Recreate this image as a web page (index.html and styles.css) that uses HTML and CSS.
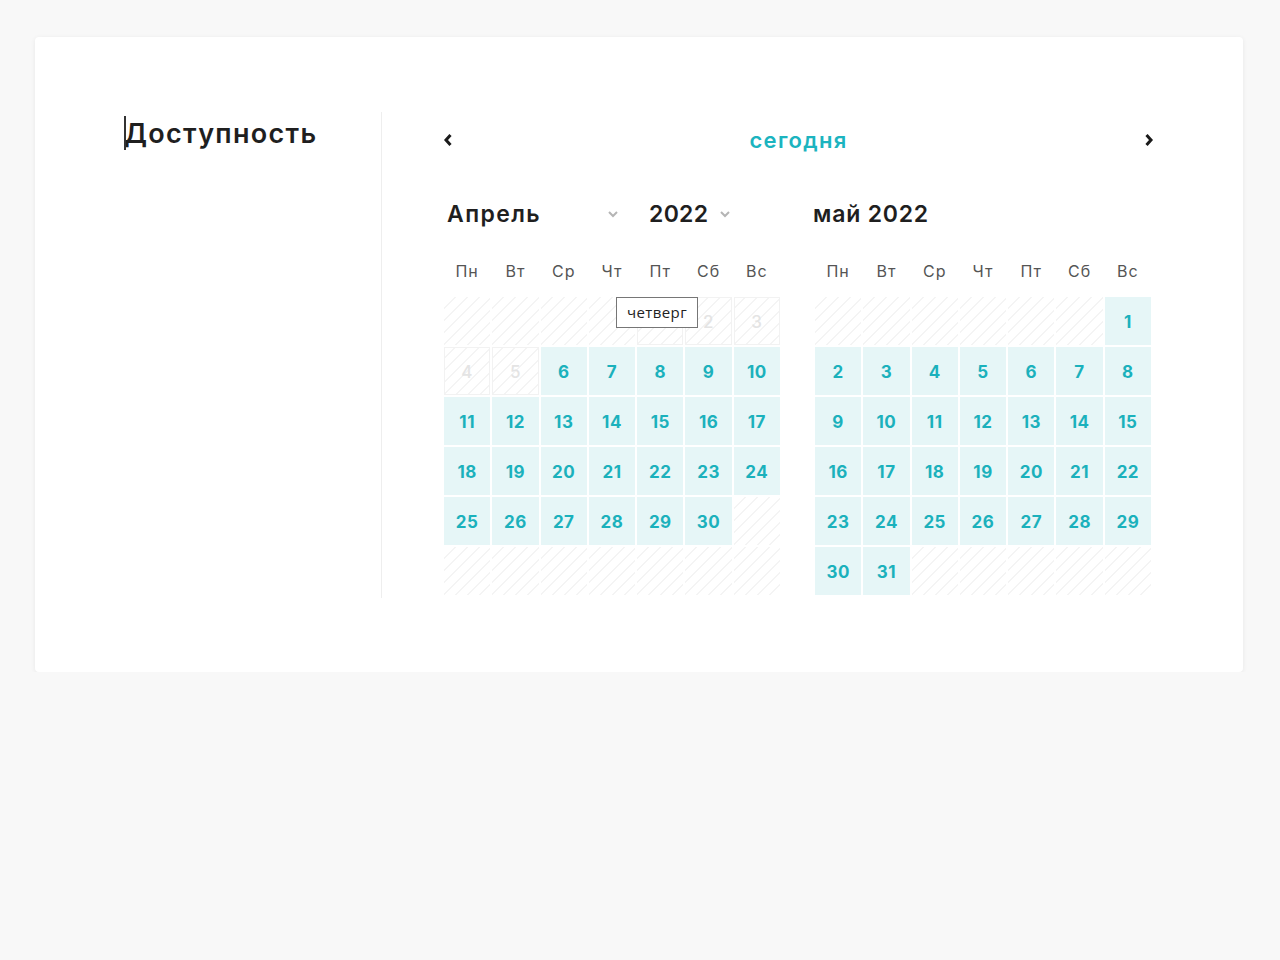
FILE: index.html
```html
<!DOCTYPE html>
<html lang="ru">
<head>
    <meta charset="UTF-8">
    <meta name="viewport" content="width=device-width, initial-scale=1.0">
    <title>Доступность</title>
    <link rel="stylesheet" href="styles.css">
</head>
<body>
    <div class="card">
        <aside class="side">
            <h1 class="title">Доступность</h1>
        </aside>
        <section class="picker">
            <div class="nav">
                <button class="nav-btn" aria-label="назад">
                    <svg width="10" height="14" viewBox="0 0 10 14"><polyline points="7.5,2 3,7 7.5,12" fill="none" stroke="#1a1a1a" stroke-width="3" stroke-linejoin="miter"/></svg>
                </button>
                <span class="today">сегодня</span>
                <button class="nav-btn" aria-label="вперёд">
                    <svg width="10" height="14" viewBox="0 0 10 14"><polyline points="2.5,2 7,7 2.5,12" fill="none" stroke="#1a1a1a" stroke-width="3" stroke-linejoin="miter"/></svg>
                </button>
            </div>
            <div class="months">
                <div class="month">
                    <div class="month-head">
                        <div class="select select-month">Апрель
                            <svg width="12" height="8" viewBox="0 0 12 8"><polyline points="2,2 6,6 10,2" fill="none" stroke="#b5b5b5" stroke-width="2"/></svg>
                        </div>
                        <div class="select select-year">2022
                            <svg width="12" height="8" viewBox="0 0 12 8"><polyline points="2,2 6,6 10,2" fill="none" stroke="#b5b5b5" stroke-width="2"/></svg>
                        </div>
                    </div>
                    <div class="weekdays">
                        <span>Пн</span><span>Вт</span><span>Ср</span><span>Чт</span><span>Пт</span><span>Сб</span><span>Вс</span>
                    </div>
                    <div class="days">
                        <span class="day empty"></span><span class="day empty"></span><span class="day empty"></span><span class="day empty"></span>
                        <span class="day off">1</span><span class="day off">2</span><span class="day off">3</span>
                        <span class="day off">4</span><span class="day off">5</span><span class="day">6</span><span class="day">7</span><span class="day">8</span><span class="day">9</span><span class="day">10</span>
                        <span class="day">11</span><span class="day">12</span><span class="day">13</span><span class="day">14</span><span class="day">15</span><span class="day">16</span><span class="day">17</span>
                        <span class="day">18</span><span class="day">19</span><span class="day">20</span><span class="day">21</span><span class="day">22</span><span class="day">23</span><span class="day">24</span>
                        <span class="day">25</span><span class="day">26</span><span class="day">27</span><span class="day">28</span><span class="day">29</span><span class="day">30</span><span class="day empty"></span>
                        <span class="day empty"></span><span class="day empty"></span><span class="day empty"></span><span class="day empty"></span><span class="day empty"></span><span class="day empty"></span><span class="day empty"></span>
                        <div class="tooltip">четверг</div>
                    </div>
                </div>
                <div class="month">
                    <div class="month-head">
                        <div class="month-title">май 2022</div>
                    </div>
                    <div class="weekdays">
                        <span>Пн</span><span>Вт</span><span>Ср</span><span>Чт</span><span>Пт</span><span>Сб</span><span>Вс</span>
                    </div>
                    <div class="days">
                        <span class="day empty"></span><span class="day empty"></span><span class="day empty"></span><span class="day empty"></span><span class="day empty"></span><span class="day empty"></span><span class="day">1</span>
                        <span class="day">2</span><span class="day">3</span><span class="day">4</span><span class="day">5</span><span class="day">6</span><span class="day">7</span><span class="day">8</span>
                        <span class="day">9</span><span class="day">10</span><span class="day">11</span><span class="day">12</span><span class="day">13</span><span class="day">14</span><span class="day">15</span>
                        <span class="day">16</span><span class="day">17</span><span class="day">18</span><span class="day">19</span><span class="day">20</span><span class="day">21</span><span class="day">22</span>
                        <span class="day">23</span><span class="day">24</span><span class="day">25</span><span class="day">26</span><span class="day">27</span><span class="day">28</span><span class="day">29</span>
                        <span class="day">30</span><span class="day">31</span><span class="day empty"></span><span class="day empty"></span><span class="day empty"></span><span class="day empty"></span><span class="day empty"></span>
                    </div>
                </div>
            </div>
        </section>
    </div>
</body>
</html>
```

FILE: styles.css
```css
body {
    margin: 0;
    padding: 37px 37px 0 35px;
    background: #f8f8f8;
    font-family: 'Inter', 'DejaVu Sans', sans-serif;
    color: #1f1f1f;
}

.card {
    display: flex;
    background: #fff;
    border-radius: 4px;
    box-shadow: 0 1px 5px rgba(0, 0, 0, 0.07);
    padding: 75px 83px 74px 88px;
}

.side {
    width: 258px;
    border-right: 1px solid #eeeeee;
}

.title {
    position: relative;
    margin: 2px 0 0 1px;
    font-size: 27px;
    line-height: 40px;
    font-weight: 600;
    letter-spacing: 1.3px;
}

/* text caret in front of the heading */
.title::before {
    content: "";
    position: absolute;
    left: 0;
    top: 2px;
    width: 2px;
    height: 34px;
    background: #333;
}

.picker {
    flex: 1;
    padding-left: 57px;
    padding-bottom: 3px;
}

.nav {
    height: 56px;
    display: flex;
    align-items: center;
    justify-content: space-between;
    width: 716px;
}

.nav-btn {
    background: none;
    border: none;
    padding: 0;
    margin: 0 0 0 3px;
    width: 12px;
    height: 16px;
    display: flex;
    align-items: center;
    justify-content: center;
    cursor: pointer;
}

.nav-btn:last-child {
    margin: 0;
}

.today {
    color: #1cb4bf;
    font-size: 22px;
    font-weight: 600;
    letter-spacing: 1.3px;
}

.months {
    display: flex;
    gap: 35px;
    margin-top: 26px;
    padding-left: 5px;
}

.month {
    width: 336px;
}

.month-head {
    height: 40px;
    display: flex;
    align-items: center;
}

.select {
    display: flex;
    align-items: center;
    justify-content: space-between;
    font-size: 23px;
    font-weight: 600;
    letter-spacing: 1.4px;
}

.select-month {
    width: 172px;
    padding-left: 3px;
    margin-right: 30px;
}

.select-year {
    width: 82px;
    letter-spacing: 0.3px;
}

.month-title {
    font-size: 23px;
    font-weight: 600;
    letter-spacing: 0.8px;
    margin-left: -2px;
}

.weekdays {
    display: grid;
    grid-template-columns: repeat(7, 1fr);
    column-gap: 2px;
    height: 40px;
    margin-top: 17px;
    margin-bottom: 6px;
    align-items: center;
    text-align: center;
    font-size: 16px;
    letter-spacing: 1px;
    color: #555;
}

.days {
    position: relative;
    display: grid;
    grid-template-columns: repeat(7, 1fr);
    grid-auto-rows: 48px;
    gap: 2px;
}

.day {
    display: flex;
    align-items: center;
    justify-content: center;
    background: #e6f6f7;
    color: #1bb1bc;
    font-size: 17px;
    font-weight: 700;
    letter-spacing: 0.5px;
    padding-top: 2px;
}

.day.empty,
.day.off {
    background: repeating-linear-gradient(135deg, #fff 0, #fff 7.5px, #f4f4f4 7.5px, #f4f4f4 8.5px);
}

.day.off {
    color: #e4e4e4;
    font-weight: 500;
    box-shadow: inset 0 0 0 1px #f2f2f2;
}

.tooltip {
    position: absolute;
    left: 172px;
    top: 0;
    padding: 4px 10px 5px;
    background: #fff;
    border: 1px solid #767676;
    font-family: 'Open Sans', sans-serif;
    font-size: 15px;
    letter-spacing: 0.4px;
    color: #222;
}
```
